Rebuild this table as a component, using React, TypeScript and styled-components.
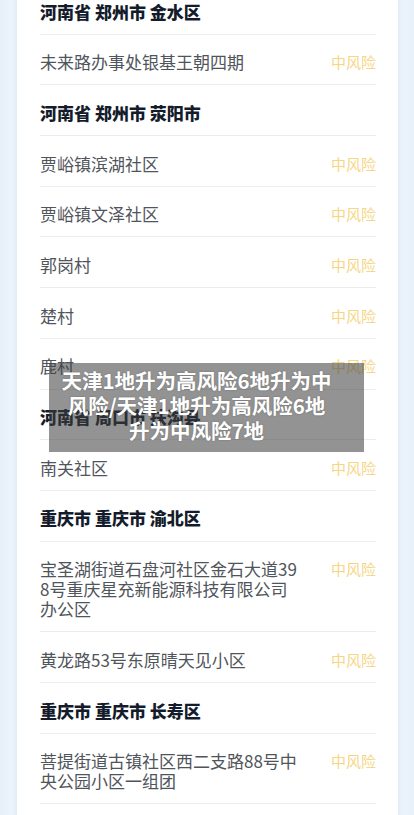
import React from "react";
import styled, { createGlobalStyle } from "styled-components";

const GlobalStyle = createGlobalStyle`
  html, body {
    margin: 0;
    padding: 0;
    background: #e8f1fb;
    font-family: "Noto Sans CJK SC", "Noto Sans", sans-serif;
  }
  #root { overflow: hidden; height: 815px; }
`;

const Page = styled.div`
  position: relative;
  width: 414px;
  height: 815px;
  overflow: hidden;
  background: linear-gradient(90deg, #e6f0fa 0%, #eef5fc 4%, #eef5fc 96%, #e6f0fa 100%);
`;

const Card = styled.div`
  margin: -16px 16px 0 17px;
  background: #ffffff;
  box-shadow: 0 0 6px rgba(205, 222, 240, 0.7);
  padding: 0 22px 0 23px;
`;

const Row = styled.div`
  display: flex;
  justify-content: space-between;
  align-items: flex-start;
  padding: 17.6px 0 12.1px;
  border-bottom: 1px solid #ececec;
`;

const Place = styled.div<{ $header?: boolean }>`
  width: 262px;
  font-size: 17px;
  line-height: 20px;
  word-break: break-all;
  color: ${(p) => (p.$header ? "#141c2b" : "#50555b")};
  font-weight: ${(p) => (p.$header ? 900 : 400)};
`;

const Risk = styled.div`
  font-size: 15px;
  line-height: 20px;
  color: #f6d684;
  white-space: nowrap;
`;

const Overlay = styled.div`
  position: absolute;
  left: 49px;
  top: 363px;
  width: 315px;
  height: 89px;
  box-sizing: border-box;
  padding: 4.5px 30px 0 10px;
  background: rgba(62, 62, 62, 0.56);
  display: flex;
  justify-content: center;
`;

const OverlayText = styled.div`
  width: 274px;
  flex: none;
  text-align: center;
  color: #ffffff;
  font-size: 20.5px;
  line-height: 25px;
  font-weight: 700;
  word-break: break-all;
  text-shadow: 0 0 2px rgba(0, 0, 0, 0.25);
`;

type Item = { text: string; header?: boolean };

const items: Item[] = [
  { text: "河南省 郑州市 金水区", header: true },
  { text: "未来路办事处银基王朝四期" },
  { text: "河南省 郑州市 荥阳市", header: true },
  { text: "贾峪镇滨湖社区" },
  { text: "贾峪镇文泽社区" },
  { text: "郭岗村" },
  { text: "楚村" },
  { text: "鹿村" },
  { text: "河南省 周口市 扶沟县", header: true },
  { text: "南关社区" },
  { text: "重庆市 重庆市 渝北区", header: true },
  { text: "宝圣湖街道石盘河社区金石大道398号重庆星充新能源科技有限公司办公区" },
  { text: "黄龙路53号东原晴天见小区" },
  { text: "重庆市 重庆市 长寿区", header: true },
  { text: "菩提街道古镇社区西二支路88号中央公园小区一组团" },
  { text: "" },
];

export default function App() {
  return (
    <Page>
      <GlobalStyle />
      <Card>
        {items.map((it, i) => (
          <Row key={i}>
            <Place $header={it.header}>{it.text}</Place>
            {!it.header && it.text && <Risk>中风险</Risk>}
          </Row>
        ))}
      </Card>
      <Overlay>
        <OverlayText>天津1地升为高风险6地升为中风险/天津1地升为高风险6地升为中风险7地</OverlayText>
      </Overlay>
    </Page>
  );
}
